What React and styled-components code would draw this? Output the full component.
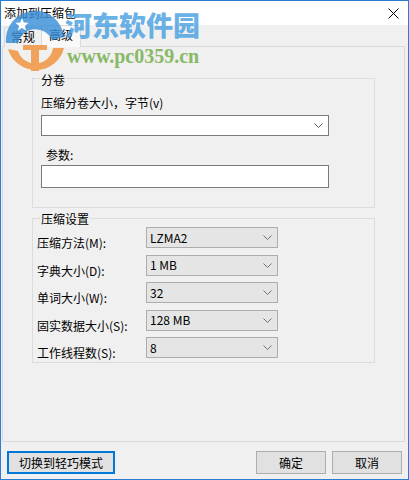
import React from "react";
import styled, { createGlobalStyle } from "styled-components";

const Global = createGlobalStyle`
  html, body { margin: 0; padding: 0; background: #fff; }
  body {
    font-family: "Noto Sans CJK SC", "Noto Sans", sans-serif;
    font-size: 12px;
    color: #000;
  }
  * { box-sizing: border-box; }
`;

const Window = styled.div`
  position: relative;
  width: 409px;
  height: 480px;
  border: 1px solid #2b7cd3;
  background: #f0f0f0;
  display: flex;
  flex-direction: column;
  overflow: hidden;
`;

const TitleBar = styled.div`
  height: 24px;
  background: #fff;
  display: flex;
  align-items: center;
  justify-content: space-between;
  padding: 0 9px 0 3px;
`;

const Title = styled.span`
  line-height: 16px;
`;

const Body = styled.div`
  flex: 1;
  display: flex;
  flex-direction: column;
  padding: 0 3px 0 1px;
`;

const TabStrip = styled.div`
  height: 22px;
  display: flex;
  align-items: flex-end;
  padding-left: 2px;
`;

const Tab = styled.div`
  position: relative;
  z-index: ${(p) => (p.$active ? 2 : 1)};
  height: ${(p) => (p.$active ? "22px" : "20px")};
  padding: 0 ${(p) => (p.$active ? "7px" : "6px")};
  margin-left: ${(p) => (p.$active ? "-1px" : "0")};
  border: 1px solid #d9d9d9;
  border-bottom: none;
  background: ${(p) => (p.$active ? "#f9f9f9" : "#f0f0f0")};
  line-height: 18px;
`;

const Panel = styled.div`
  margin-top: -1px;
  height: 396px;
  border: 1px solid #d9d9d9;
  display: flex;
  flex-direction: column;
  align-items: flex-start;
  padding-left: 29px;
`;

const Group = styled.div`
  width: 343px;
  margin-top: ${(p) => p.$top}px;
  border: 1px solid #dcdcdc;
  padding: 0 0 ${(p) => p.$bottom}px ${(p) => p.$left}px;
  display: flex;
  flex-direction: column;
  align-items: flex-start;
`;

const GroupTitle = styled.span`
  display: inline-block;
  line-height: ${(p) => p.$lh || 16}px;
  height: ${(p) => p.$lh || 16}px;
  margin-top: -7px;
  margin-left: ${(p) => p.$ml}px;
  padding: 0 1px;
  background: #f0f0f0;
`;

const FieldLabel = styled.div`
  line-height: 16px;
  margin-top: ${(p) => p.$mt}px;
  margin-left: ${(p) => p.$ml || 0}px;
`;

const Combo = styled.div`
  width: ${(p) => p.$w}px;
  height: 21px;
  margin-top: ${(p) => p.$mt || 0}px;
  display: flex;
  align-items: center;
  justify-content: space-between;
  padding: 0 5px 0 3px;
  background: ${(p) => (p.$white ? "#fff" : "#e5e5e5")};
  border: 1px solid ${(p) => (p.$white ? "#7a7a7a" : "#adadad")};
  line-height: 16px;
`;

const TextBox = styled.div`
  width: 288px;
  height: 23px;
  margin-top: 2px;
  background: #fff;
  border: 1px solid #7a7a7a;
`;

const Rows = styled.div`
  margin-top: 1px;
  display: flex;
  flex-direction: column;
  gap: 6.5px;
`;

const Row = styled.div`
  display: flex;
  height: 21px;
`;

const RowLabel = styled.div`
  width: 109px;
  line-height: 16px;
  padding-top: 8px;
  white-space: nowrap;
`;

const Footer = styled.div`
  margin-top: 9px;
  display: flex;
  align-items: center;
  padding: 0 3px 0 5px;
`;

const Button = styled.div`
  width: ${(p) => p.$w}px;
  height: 23px;
  margin-left: ${(p) => p.$ml || 0}px;
  display: flex;
  align-items: center;
  justify-content: center;
  background: #e1e1e1;
  border: ${(p) => (p.$default ? "2px solid #0078d7" : "1px solid #adadad")};
  line-height: 16px;
`;

const Spacer = styled.div`
  flex: 1;
`;

const Watermark = styled.div`
  position: absolute;
  left: 0;
  top: 0;
  pointer-events: none;
  z-index: 5;
  opacity: 0.82;
`;

const LogoSvg = styled.svg`
  position: absolute;
  left: 3px;
  top: 7px;
`;

const WmTitle = styled.div`
  position: absolute;
  left: 64px;
  top: 9px;
  font-family: "Noto Sans CJK SC", sans-serif;
  font-weight: 900;
  font-size: 27px;
  line-height: 30px;
  color: #4aa0e0;
  white-space: nowrap;
`;

const WmUrl = styled.div`
  position: absolute;
  left: 66px;
  top: 44px;
  font-family: "Liberation Serif", serif;
  font-weight: 700;
  font-size: 20px;
  line-height: 22px;
  color: #72ad48;
  white-space: nowrap;
`;

const Chevron = ({ color = "#606060" }) => (
  <svg width="9" height="5" viewBox="0 0 9 5">
    <path d="M0.5 0.5 L4.5 4.5 L8.5 0.5" fill="none" stroke={color} strokeWidth="1" />
  </svg>
);

const CloseIcon = () => (
  <svg width="11" height="11" viewBox="0 0 11 11">
    <path d="M0.5 0.5 L10.5 10.5 M10.5 0.5 L0.5 10.5" stroke="#000" strokeWidth="1" />
  </svg>
);

const Logo = () => (
  <LogoSvg width="62" height="64" viewBox="0 0 62 64">
    <path d="M2 35 A29 29 0 0 1 60 29 L48 32 A18 18 0 0 0 14 35 Z" fill="#3a8fd8" />
    <path d="M4 41 A29 29 0 0 0 60 40 L49 40 A18 18 0 0 1 14 43 Z" fill="#f0913a" />
    <rect x="27" y="39" width="8" height="24" fill="#f0913a" />
    <rect x="19" y="37" width="24" height="5" fill="#f0913a" />
    <path
      d="M18 10 L19.8 14.6 L24.6 14.8 L20.9 17.9 L22.2 22.6 L18 19.9 L13.8 22.6 L15.1 17.9 L11.4 14.8 L16.2 14.6 Z"
      fill="#fff"
    />
  </LogoSvg>
);

const settings = [
  ["压缩方法(M):", "LZMA2"],
  ["字典大小(D):", "1 MB"],
  ["单词大小(W):", "32"],
  ["固实数据大小(S):", "128 MB"],
  ["工作线程数(S):", "8"],
];

export default function App() {
  return (
    <>
      <Global />
      <Window>
        <TitleBar>
          <Title>添加到压缩包</Title>
          <CloseIcon />
        </TitleBar>
        <Body>
          <TabStrip>
            <Tab>常规</Tab>
            <Tab $active>高级</Tab>
          </TabStrip>
          <Panel>
            <Group $top={31} $bottom={19} $left={8}>
              <GroupTitle $ml={-1}>分卷</GroupTitle>
              <FieldLabel $mt={7}>压缩分卷大小，字节(v)</FieldLabel>
              <Combo $white $w={288} $mt={4}>
                <span />
                <Chevron color="#555" />
              </Combo>
              <FieldLabel $mt={11} $ml={5}>参数:</FieldLabel>
              <TextBox />
            </Group>
            <Group $top={10} $bottom={4} $left={4}>
              <GroupTitle $ml={3} $lh={14}>压缩设置</GroupTitle>
              <Rows>
                {settings.map(([label, value]) => (
                  <Row key={label}>
                    <RowLabel>{label}</RowLabel>
                    <Combo $w={132}>
                      <span>{value}</span>
                      <Chevron color="#707070" />
                    </Combo>
                  </Row>
                ))}
              </Rows>
            </Group>
          </Panel>
          <Footer>
            <Button $default $w={108}>切换到轻巧模式</Button>
            <Spacer />
            <Button $w={70}>确定</Button>
            <Button $w={70} $ml={6}>取消</Button>
          </Footer>
        </Body>
        <Watermark>
          <Logo />
          <WmTitle>河东软件园</WmTitle>
          <WmUrl>www.pc0359.cn</WmUrl>
        </Watermark>
      </Window>
    </>
  );
}
